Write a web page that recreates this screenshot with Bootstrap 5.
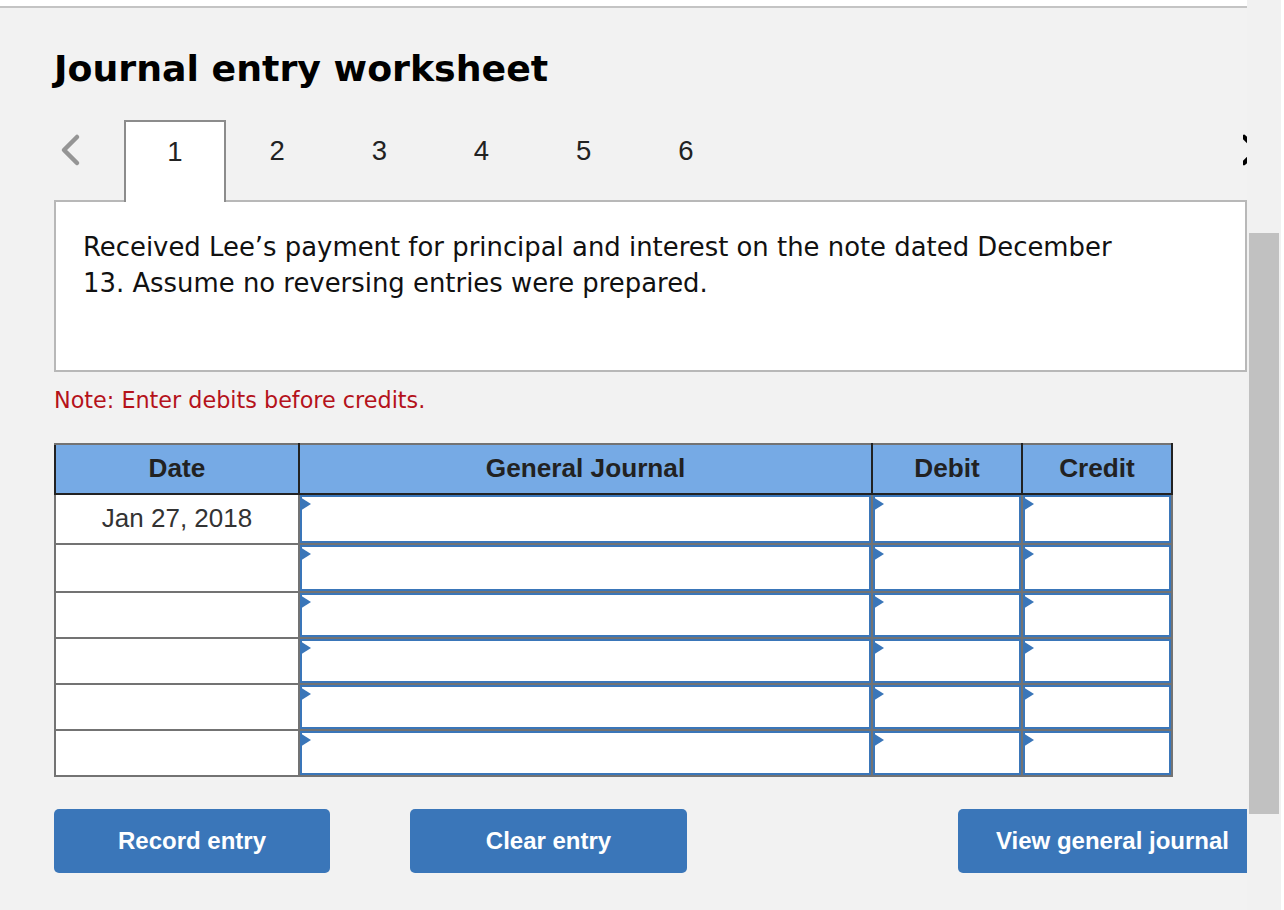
<!DOCTYPE html>
<html lang="en">
<head>
    <meta charset="UTF-8">
    <meta name="viewport" content="width=device-width, initial-scale=1.0">
    <title>Journal entry worksheet</title>
    <link href="https://cdn.jsdelivr.net/npm/bootstrap@5.3.3/dist/css/bootstrap.min.css" rel="stylesheet">
    <style>
        html, body { height: 910px; overflow: hidden; background: #fff; }
        .shell { height: 910px; }
        .sheet { width: 1247px; margin-top: 6px; border-top: 2px solid #c4c4c4; background: #f2f2f2; padding: 0 0 0 54px; overflow: hidden; flex: none; }
        .scroll-track { width: 34px; flex: none; background: #f1f1f1; padding: 233px 2px 96px; }
        .scroll-thumb { height: 581px; background: #c1c1c1; }
        .sheet-title { font: bold 36.3px/44px "DejaVu Sans", sans-serif; color: #000; margin: 39px 0 0; }
        .step-bar { height: 82px; margin-top: 29px; position: relative; z-index: 1; width: 1193px; }
        .step-prev { width: 71px; flex: none; padding: 12px 0 0 5px; }
        .step-next { margin-left: auto; padding-top: 12px; flex: none; width: 4px; overflow: hidden; }
        .step-item { width: 102.2px; height: 82px; flex: none; text-align: center; font: 27.5px/62px "Liberation Sans", sans-serif; color: #222; }
        .step-item.is-active { width: 102px; background: #fff; border: 2px solid #8c8c8c; border-bottom: 0; line-height: 60px; margin-left: -1px; margin-right: 1px; }
        .step-item:not(.is-active) { position: relative; left: -1px; }
        .prompt-box { width: 1193px; height: 172px; margin-top: -2px; background: #fff; border: 2px solid #b8b8b8; padding: 27px 100px 0 27px; font: 25.9px/36px "DejaVu Sans", sans-serif; color: #111; }
        .note-line { font: 22.3px/28px "DejaVu Sans", sans-serif; color: #b5121b; margin: 14px 0 29px; }
        .journal { width: 1117px; table-layout: fixed; border-collapse: collapse; background: #fff; border: 2px solid #737373; margin: 0; }
        .journal th { background: #76aae5; color: #222; font: bold 26.2px/28px "Liberation Sans", sans-serif; text-align: center; vertical-align: middle; border: 2px solid #222; border-top-color: #737373; height: 50px; padding: 0 0 2px; }
        .journal td { border: 2px solid #737373; padding: 0 0 2px; position: relative; font: 26px/30px "Liberation Sans", sans-serif; color: #333; text-align: center; vertical-align: middle; }
        .journal tr.h50 td { height: 50px; }
        .journal tr.h48 td { height: 48px; }
        .journal tr.h46 td { height: 46px; }
        .entry-cell { border: 2px solid #3a76b9; position: absolute; inset: 0; background: #fff; }
        .entry-cell::before { content: ""; position: absolute; left: -2px; top: 0; border-left: 11px solid #3a76b9; border-top: 7px solid transparent; border-bottom: 7px solid transparent; }
        .action-row { margin-top: 32px; width: 1260px; }
        .action-btn { height: 64px; background: #3a76b9; border: 0; border-radius: 5px; color: #fff; font: bold 24px/30px "Liberation Sans", sans-serif; padding: 0; flex: none; }
        .w-record { width: 276px; margin-right: 80px; }
        .w-clear { width: 277px; margin-right: 271px; }
        .w-view { width: 309px; }
    </style>
</head>
<body>
    <div class="shell d-flex">
        <div class="sheet">
            <h1 class="sheet-title">Journal entry worksheet</h1>

            <div class="step-bar d-flex">
                <div class="step-prev">
                    <svg width="24" height="36" viewBox="0 0 24 36"><path d="M18 5 L5 18 L18 31" fill="none" stroke="#959595" stroke-width="4.5" stroke-linecap="round" stroke-linejoin="round"/></svg>
                </div>
                <div class="step-item is-active">1</div>
                <div class="step-item">2</div>
                <div class="step-item">3</div>
                <div class="step-item">4</div>
                <div class="step-item">5</div>
                <div class="step-item">6</div>
                <div class="step-next">
                    <svg width="24" height="36" viewBox="0 0 24 36"><path d="M1 5 L14 18 L1 31" fill="none" stroke="#000" stroke-width="4.5" stroke-linecap="round" stroke-linejoin="round"/></svg>
                </div>
            </div>

            <div class="prompt-box">Received Lee’s payment for principal and interest on the note dated December 13. Assume no reversing entries were prepared.</div>

            <p class="note-line">Note: Enter debits before credits.</p>

            <table class="journal">
                <colgroup>
                    <col style="width:244px"><col style="width:573px"><col style="width:150px"><col style="width:150px">
                </colgroup>
                <thead>
                    <tr><th>Date</th><th>General Journal</th><th>Debit</th><th>Credit</th></tr>
                </thead>
                <tbody>
                    <tr class="h50"><td>Jan 27, 2018</td><td><div class="entry-cell"></div></td><td><div class="entry-cell"></div></td><td><div class="entry-cell"></div></td></tr>
                    <tr class="h48"><td></td><td><div class="entry-cell"></div></td><td><div class="entry-cell"></div></td><td><div class="entry-cell"></div></td></tr>
                    <tr class="h46"><td></td><td><div class="entry-cell"></div></td><td><div class="entry-cell"></div></td><td><div class="entry-cell"></div></td></tr>
                    <tr class="h46"><td></td><td><div class="entry-cell"></div></td><td><div class="entry-cell"></div></td><td><div class="entry-cell"></div></td></tr>
                    <tr class="h46"><td></td><td><div class="entry-cell"></div></td><td><div class="entry-cell"></div></td><td><div class="entry-cell"></div></td></tr>
                    <tr class="h46"><td></td><td><div class="entry-cell"></div></td><td><div class="entry-cell"></div></td><td><div class="entry-cell"></div></td></tr>
                </tbody>
            </table>

            <div class="action-row d-flex">
                <button type="button" class="action-btn w-record">Record entry</button>
                <button type="button" class="action-btn w-clear">Clear entry</button>
                <button type="button" class="action-btn w-view">View general journal</button>
            </div>
        </div>
        <div class="scroll-track"><div class="scroll-thumb"></div></div>
    </div>
    <script src="https://cdn.jsdelivr.net/npm/bootstrap@5.3.3/dist/js/bootstrap.bundle.min.js"></script>
</body>
</html>
